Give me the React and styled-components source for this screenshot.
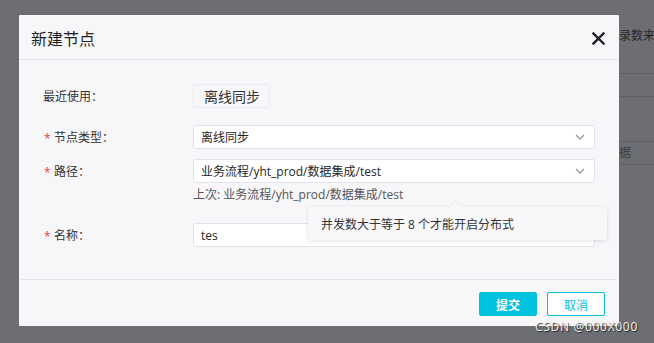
import React from 'react'
import styled, { createGlobalStyle } from 'styled-components'

const GlobalStyle = createGlobalStyle`
    html, body {
        margin: 0;
        padding: 0;
    }
    body {
        font-family: "Open Sans", "Noto Sans CJK SC", sans-serif;
        background: #6d6e73;
    }
`;

const Page = styled.div`
    position: relative;
    width: 654px;
    height: 343px;
    overflow: hidden;
    background: #6d6e73;
`;

const BackPanel = styled.div`
    margin-left: 607px;
    padding-top: 27px;
    display: flex;
    flex-direction: column;
    font-size: 12px;
    color: #26272b;
`;

const BackTitle = styled.div`
    height: 18px;
    line-height: 18px;
    white-space: nowrap;
`;

const BackRow = styled.div`
    height: ${props => props.h}px;
    border-bottom: 1px solid #5f6065;
    line-height: ${props => props.h}px;
    white-space: nowrap;
    padding-top: ${props => props.top || 0}px;
    color: #3b3c40;
`;

const Dialog = styled.div`
    position: absolute;
    left: 19px;
    top: 15px;
    width: 600px;
    height: 311px;
    background: #f7f7fa;
    border-radius: 1px;
    display: flex;
    flex-direction: column;
`;

const DialogHeader = styled.div`
    height: 44px;
    flex-shrink: 0;
    display: flex;
    align-items: center;
    justify-content: space-between;
    padding: 0 14px 0 12px;
    border-bottom: 1px solid #e1e1ea;
`;

const DialogTitle = styled.div`
    font-size: 16px;
    color: #1f1f24;
    margin-top: 2px;
`;

const CloseIcon = styled.svg`
    width: 13px;
    height: 13px;
    margin-top: 2px;
`;

const DialogBody = styled.div`
    flex: 1;
    padding: 24px 24px 0 24px;
    display: flex;
    flex-direction: column;
`;

const FormRow = styled.div`
    display: grid;
    grid-template-columns: 150px 1fr;
    align-items: start;
    margin-top: ${props => props.gap || 0}px;
`;

const Label = styled.div`
    height: 24px;
    display: flex;
    align-items: center;
    font-size: 12px;
    color: #333;
    white-space: nowrap;
`;

const Star = styled.span`
    color: #f04134;
    width: 10px;
    padding-left: 1px;
    font-size: 12px;
    margin-top: 3px;
`;

const Chip = styled.div`
    justify-self: start;
    height: 24px;
    box-sizing: border-box;
    padding: 0 9px 0 10px;
    display: flex;
    align-items: center;
    font-size: 14px;
    color: #333;
    background: #f7f7fa;
    border: 1px solid #ececf2;
    border-radius: 2px;
`;

const Field = styled.div`
    display: flex;
    flex-direction: column;
`;

const InputBox = styled.div`
    height: 24px;
    box-sizing: border-box;
    background: #fff;
    border: 1px solid #e3e3ef;
    border-radius: 2px;
    display: flex;
    align-items: center;
    justify-content: space-between;
    padding: 0 9px 0 7px;
    font-size: 12px;
    color: #262626;
`;

const Chevron = styled.svg`
    width: 10px;
    height: 6px;
`;

const Hint = styled.div`
    font-size: 12px;
    color: #555;
    height: 24px;
    line-height: 24px;
    margin-bottom: 16px;
`;

const Tooltip = styled.div`
    position: absolute;
    left: 289px;
    top: 192px;
    width: 299px;
    height: 33px;
    box-sizing: border-box;
    padding-left: 13px;
    display: flex;
    align-items: center;
    background: #f8f8fb;
    border-radius: 4px;
    box-shadow: 0 1px 4px rgba(0, 0, 0, 0.12);
    font-size: 12px;
    color: #333;
    white-space: nowrap;

    &::before {
        content: "";
        position: absolute;
        left: 144px;
        top: -4px;
        width: 7px;
        height: 7px;
        background: #f8f8fb;
        transform: rotate(45deg);
        box-shadow: -1px -1px 1px rgba(0, 0, 0, 0.05);
    }
`;

const DialogFooter = styled.div`
    height: 47px;
    flex-shrink: 0;
    margin: 0 2px;
    border-top: 1px solid #e1e1ea;
    display: flex;
    justify-content: flex-end;
    align-items: flex-start;
    gap: 10px;
    padding: 12px 12px 0 0;
    box-sizing: border-box;
`;

const Button = styled.button`
    width: 58px;
    height: 24px;
    padding: 0;
    border-radius: 2px;
    font-family: "Noto Sans CJK SC", sans-serif;
    font-size: 12px;
    font-weight: ${props => props.primary ? 700 : 400};
    color: ${props => props.primary ? '#fff' : '#00c1de'};
    background: ${props => props.primary ? '#00c1de' : '#fff'};
    border: 1px solid #00c1de;
    cursor: pointer;
`;

const Watermark = styled.div`
    position: absolute;
    right: 16px;
    bottom: 8px;
    font-size: 12px;
    color: #f2f2f2;
    text-shadow: 1px 1px 1px #222;
    letter-spacing: 0.7px;
`;

const ArrowDown = () => (
    <Chevron viewBox="0 0 10 6">
        <path d="M1 1 L5 5 L9 1" fill="none" stroke="#9b9bab" strokeWidth="1.4" />
    </Chevron>
);

const App = () => {
    return (
        <Page>
            <GlobalStyle />
            <BackPanel>
                <BackTitle>记录数来源</BackTitle>
                <BackRow h={13} top={15}></BackRow>
                <BackRow h={22}></BackRow>
                <BackRow h={44}></BackRow>
                <BackRow h={22}>数据</BackRow>
            </BackPanel>

            <Dialog>
                <DialogHeader>
                    <DialogTitle>新建节点</DialogTitle>
                    <CloseIcon viewBox="0 0 13 13">
                        <path d="M1.5 1.5 L11.5 11.5 M11.5 1.5 L1.5 11.5" stroke="#1f1f28" strokeWidth="2.4" strokeLinecap="square" />
                    </CloseIcon>
                </DialogHeader>

                <DialogBody>
                    <FormRow>
                        <Label>最近使用：</Label>
                        <Chip>离线同步</Chip>
                    </FormRow>

                    <FormRow gap={17}>
                        <Label><Star>*</Star>节点类型：</Label>
                        <InputBox>离线同步<ArrowDown /></InputBox>
                    </FormRow>

                    <FormRow gap={10}>
                        <Label><Star>*</Star>路径：</Label>
                        <Field>
                            <InputBox>业务流程/yht_prod/数据集成/test<ArrowDown /></InputBox>
                            <Hint>上次: 业务流程/yht_prod/数据集成/test</Hint>
                        </Field>
                    </FormRow>

                    <FormRow>
                        <Label><Star>*</Star>名称：</Label>
                        <InputBox>tes</InputBox>
                    </FormRow>

                    <Tooltip>并发数大于等于 8 个才能开启分布式</Tooltip>
                </DialogBody>

                <DialogFooter>
                    <Button primary>提交</Button>
                    <Button>取消</Button>
                </DialogFooter>
            </Dialog>

            <Watermark>CSDN @000X000</Watermark>
        </Page>
    )
}

export default App
